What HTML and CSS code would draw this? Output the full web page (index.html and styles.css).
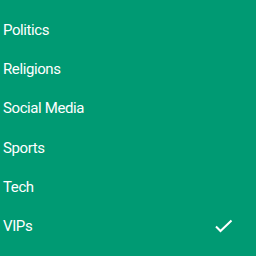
FILE: index.html
```html
<!DOCTYPE html>
<html>
<head>
    <meta charset="UTF-8">
    <title>Topics</title>
    <link rel="stylesheet" href="styles.css">
</head>
<body>
<ul class="topic-list">
    <li class="topic">Politics</li>
    <li class="topic">Religions</li>
    <li class="topic">Social Media</li>
    <li class="topic">Sports</li>
    <li class="topic">Tech</li>
    <li class="topic selected">VIPs
        <svg class="check" width="20" height="14" viewBox="0 0 20 14">
            <path d="M2 7.5 L6.5 12 L17.5 1.5" fill="none" stroke="#fff" stroke-width="2"/>
        </svg>
    </li>
</ul>
</body>
</html>
```

FILE: styles.css
```css
body {
    margin: 0;
    background-color: #009a73;
    font-family: Roboto, "Liberation Sans", sans-serif;
    color: #fff;
    width: 256px;
    height: 256px;
    overflow: hidden;
}
.topic-list {
    list-style: none;
    margin: 0;
    padding: 10px 0 0 0;
}
.topic {
    display: flex;
    align-items: center;
    justify-content: space-between;
    height: 39.3px;
    padding: 0 22px 0 3px;
    font-size: 15px;
    letter-spacing: -0.4px;
}
.check {
    display: block;
}
```
